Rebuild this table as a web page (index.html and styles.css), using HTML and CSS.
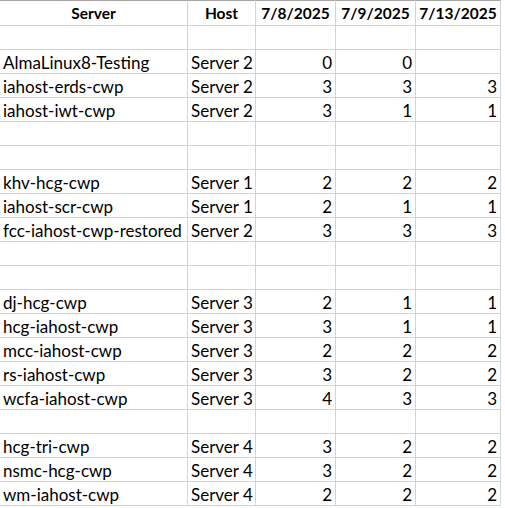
FILE: index.html
```html
<!DOCTYPE html>
<html>
<head>
<meta charset="utf-8">
<link rel="stylesheet" href="styles.css">
</head>
<body>
<div class="sheet">
  <div class="c hd">Server</div><div class="c hd">Host</div><div class="c hd">7/8/2025</div><div class="c hd">7/9/2025</div><div class="c hd">7/13/2025</div>

  <div class="c"></div><div class="c"></div><div class="c"></div><div class="c"></div><div class="c"></div>
  <div class="c t">AlmaLinux8-Testing</div><div class="c t">Server 2</div><div class="c n">0</div><div class="c n">0</div><div class="c n"></div>
  <div class="c t">iahost-erds-cwp</div><div class="c t">Server 2</div><div class="c n">3</div><div class="c n">3</div><div class="c n">3</div>
  <div class="c t">iahost-iwt-cwp</div><div class="c t">Server 2</div><div class="c n">3</div><div class="c n">1</div><div class="c n">1</div>
  <div class="c"></div><div class="c"></div><div class="c"></div><div class="c"></div><div class="c"></div>
  <div class="c"></div><div class="c"></div><div class="c"></div><div class="c"></div><div class="c"></div>
  <div class="c t">khv-hcg-cwp</div><div class="c t">Server 1</div><div class="c n">2</div><div class="c n">2</div><div class="c n">2</div>
  <div class="c t">iahost-scr-cwp</div><div class="c t">Server 1</div><div class="c n">2</div><div class="c n">1</div><div class="c n">1</div>
  <div class="c t">fcc-iahost-cwp-restored</div><div class="c t">Server 2</div><div class="c n">3</div><div class="c n">3</div><div class="c n">3</div>
  <div class="c"></div><div class="c"></div><div class="c"></div><div class="c"></div><div class="c"></div>
  <div class="c"></div><div class="c"></div><div class="c"></div><div class="c"></div><div class="c"></div>
  <div class="c t">dj-hcg-cwp</div><div class="c t">Server 3</div><div class="c n">2</div><div class="c n">1</div><div class="c n">1</div>
  <div class="c t">hcg-iahost-cwp</div><div class="c t">Server 3</div><div class="c n">3</div><div class="c n">1</div><div class="c n">1</div>
  <div class="c t">mcc-iahost-cwp</div><div class="c t">Server 3</div><div class="c n">2</div><div class="c n">2</div><div class="c n">2</div>
  <div class="c t">rs-iahost-cwp</div><div class="c t">Server 3</div><div class="c n">3</div><div class="c n">2</div><div class="c n">2</div>
  <div class="c t">wcfa-iahost-cwp</div><div class="c t">Server 3</div><div class="c n">4</div><div class="c n">3</div><div class="c n">3</div>
  <div class="c"></div><div class="c"></div><div class="c"></div><div class="c"></div><div class="c"></div>
  <div class="c t">hcg-tri-cwp</div><div class="c t">Server 4</div><div class="c n">3</div><div class="c n">2</div><div class="c n">2</div>
  <div class="c t">nsmc-hcg-cwp</div><div class="c t">Server 4</div><div class="c n">3</div><div class="c n">2</div><div class="c n">2</div>
  <div class="c t">wm-iahost-cwp</div><div class="c t">Server 4</div><div class="c n">2</div><div class="c n">2</div><div class="c n">2</div>
</div>
</body>
</html>
```
FILE: styles.css
```css
html, body {
  margin: 0;
  padding: 0;
  background: #ffffff;
}
body {
  font-family: Lato, "Open Sans", sans-serif;
  font-size: 17px;
  color: #000000;
  width: 505px;
  height: 508px;
  overflow: hidden;
}
.sheet {
  display: grid;
  grid-template-columns: 188px 68px 80px 80px 85px;
  grid-template-rows: 26px;
  grid-auto-rows: 24px;
  width: 501px;
}
.c {
  box-sizing: border-box;
  border-right: 1px solid #d4d4d4;
  border-bottom: 1px solid #d4d4d4;
  display: flex;
  align-items: center;
  white-space: nowrap;
  overflow: hidden;
  line-height: 1;
  padding-top: 1px;
}
.hd {
  border-top: 1px solid #a6a6a6;
  font-weight: bold;
  font-size: 15.5px;
  justify-content: center;
}
.t {
  padding-left: 3px;
  justify-content: flex-start;
}
.n {
  padding-right: 3px;
  justify-content: flex-end;
}
```
